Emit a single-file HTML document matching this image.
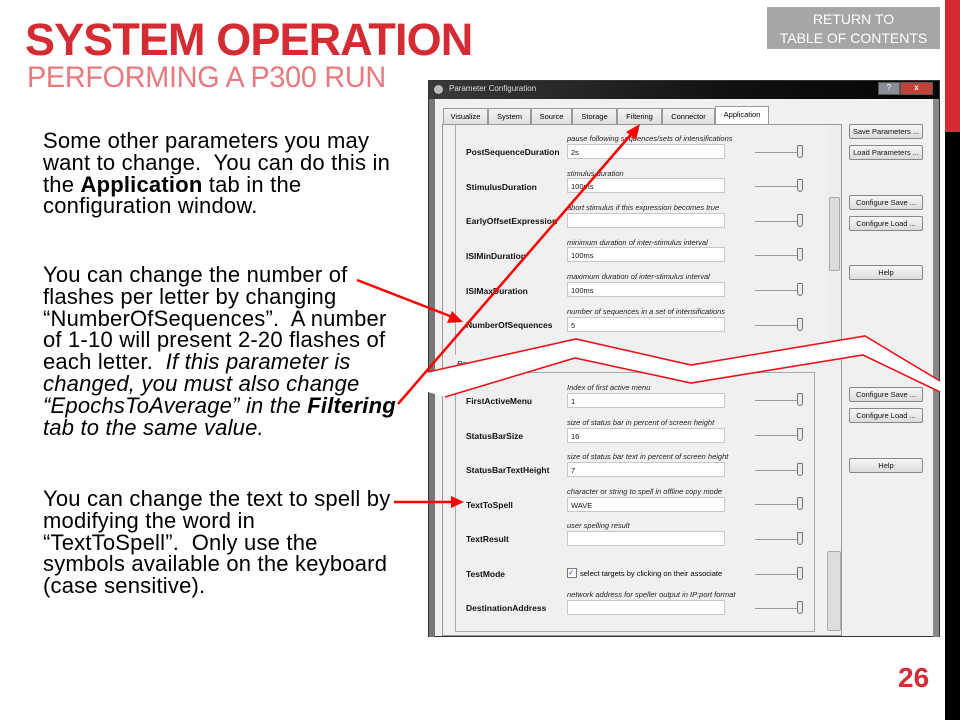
<!DOCTYPE html>
<html><head><meta charset="utf-8"><style>
*{margin:0;padding:0;box-sizing:border-box}
body{width:960px;height:720px;background:#fff;position:relative;overflow:hidden;font-family:"Liberation Sans",sans-serif}
.a{position:absolute;white-space:nowrap}
.t{font-size:22px;line-height:21.8px;color:#000;left:43px;letter-spacing:0.2px}
.win{position:absolute;left:428px;top:80px;width:512px;height:557px;background:#f0f0f0;border:1px solid #333}
.lbl{position:absolute;font-size:8.5px;font-weight:bold;color:#111}
.desc{position:absolute;font-size:7.5px;font-style:italic;color:#222}
.inp{position:absolute;width:158px;height:15px;background:#fff;border:1px solid #c8c8c8;font-size:7.5px;padding:3px 0 0 3px;color:#111}
.sl{position:absolute;width:48px;height:1px;background:#999}
.sl b{position:absolute;left:42px;top:-7px;width:6px;height:13px;background:#e8e8e8;border:1px solid #777;border-radius:1px 1px 3px 3px}
.btn{position:absolute;left:420px;width:74px;height:15px;border:1px solid #888;border-radius:2px;background:linear-gradient(#f6f6f6,#dcdcdc);font-size:7.5px;text-align:center;line-height:13px;color:#111}
.tab{position:absolute;top:27px;height:16px;border:1px solid #999;border-bottom:none;background:linear-gradient(#f4f4f4,#dfdfdf);font-size:7.5px;text-align:center;line-height:15px}
</style></head><body>
<div class="a" style="left:25px;top:14px;font-size:45px;font-weight:bold;color:#d52b32;letter-spacing:-0.9px">SYSTEM OPERATION</div>
<div class="a" style="left:27px;top:61px;font-size:30px;color:#e8797f;letter-spacing:-0.3px;transform:scaleX(0.96);transform-origin:left">PERFORMING A P300 RUN</div>
<div class="a" style="left:767px;top:7px;width:173px;height:42px;background:#a6a6a6;color:#fff;font-size:14px;text-align:center;line-height:19px;padding-top:3px">RETURN TO<br>TABLE OF CONTENTS</div>
<div class="a" style="left:945px;top:0;width:15px;height:132px;background:#d52b32"></div>
<div class="a" style="left:945px;top:132px;width:15px;height:588px;background:#000"></div>

<div class="a t" style="top:130px">Some other parameters you may<br>want to change.&nbsp; You can do this in<br>the <b>Application</b> tab in the<br>configuration window.</div>
<div class="a t" style="top:264px">You can change the number of<br>flashes per letter by changing<br>“NumberOfSequences”.&nbsp; A number<br>of 1-10 will present 2-20 flashes of<br>each letter.&nbsp; <i>If this parameter is<br>changed, you must also change<br>“EpochsToAverage” in the <b>Filtering</b><br>tab to the same value.</i></div>
<div class="a t" style="top:488px">You can change the text to spell by<br>modifying the word in<br>“TextToSpell”.&nbsp; Only use the<br>symbols available on the keyboard<br>(case sensitive).</div>

<div class="win">
 <div class="a" style="left:0;top:0;width:510px;height:18px;background:linear-gradient(90deg,#3a3a3a,#101010 60%,#050505)"></div>
 <div class="a" style="left:20px;top:3px;font-size:8px;color:#ddd">Parameter Configuration</div>
 <div class="a" style="left:5px;top:4px;width:9px;height:9px;border-radius:50%;background:#bbb"></div>
 <div class="a" style="left:449px;top:1px;width:22px;height:13px;background:#8a8f96;border:1px solid #555;color:#fff;font-size:8px;text-align:center">?</div>
 <div class="a" style="left:471px;top:1px;width:33px;height:13px;background:#c0433a;border:1px solid #555;color:#fff;font-size:8px;text-align:center;font-weight:bold">x</div>
 <div class="a" style="left:0;top:18px;width:6px;height:538px;background:#777"></div>
 <div class="a" style="left:504px;top:18px;width:6px;height:538px;background:#888"></div>
 <div class="tab" style="left:14px;width:45px">Visualize</div>
 <div class="tab" style="left:59px;width:43px">System</div>
 <div class="tab" style="left:102px;width:41px">Source</div>
 <div class="tab" style="left:143px;width:45px">Storage</div>
 <div class="tab" style="left:188px;width:45px">Filtering</div>
 <div class="tab" style="left:233px;width:53px">Connector</div>
 <div class="tab" style="left:286px;width:54px;top:25px;height:19px;background:#fff">Application</div>
 <div class="a" style="left:13px;top:43px;width:400px;height:512px;border:1px solid #999;background:#f0f0f0"></div>
 <div class="a" style="left:26px;top:44px;width:1px;height:230px;background:#aaa"></div>
 <div class="a" style="left:398px;top:44px;width:14px;height:240px;background:#eee"></div>
 <div class="a" style="left:400px;top:116px;width:11px;height:74px;background:#ddd;border:1px solid #aaa;border-radius:2px"></div>
 <div class="a" style="left:398px;top:470px;width:14px;height:80px;background:#ddd;border:1px solid #aaa;border-radius:2px"></div>
 <div class="a" style="left:26px;top:291px;width:360px;height:260px;border:1px solid #aaa"></div>
 <div class="a" style="left:28px;top:278px;font-size:7.5px;font-style:italic">Results</div>

 <div class="btn" style="top:43px">Save Parameters ...</div>
 <div class="btn" style="top:64px">Load Parameters ...</div>
 <div class="btn" style="top:114px">Configure Save ...</div>
 <div class="btn" style="top:135px">Configure Load ...</div>
 <div class="btn" style="top:184px">Help</div>
 <div class="btn" style="top:306px">Configure Save ...</div>
 <div class="btn" style="top:327px">Configure Load ...</div>
 <div class="btn" style="top:377px">Help</div>

 <div class="desc" style="left:138px;top:53px">pause following sequences/sets of intensifications</div><div class="lbl" style="left:37px;top:66px">PostSequenceDuration</div><div class="inp" style="left:138px;top:63px">2s</div><div class="sl" style="left:326px;top:71px"><b></b></div>
 <div class="desc" style="left:138px;top:88px">stimulus duration</div><div class="lbl" style="left:37px;top:101px">StimulusDuration</div><div class="inp" style="left:138px;top:97px">100ms</div><div class="sl" style="left:326px;top:105px"><b></b></div>
 <div class="desc" style="left:138px;top:122px">abort stimulus if this expression becomes true</div><div class="lbl" style="left:37px;top:135px">EarlyOffsetExpression</div><div class="inp" style="left:138px;top:132px"></div><div class="sl" style="left:326px;top:140px"><b></b></div>
 <div class="desc" style="left:138px;top:157px">minimum duration of inter-stimulus interval</div><div class="lbl" style="left:37px;top:170px">ISIMinDuration</div><div class="inp" style="left:138px;top:166px">100ms</div><div class="sl" style="left:326px;top:174px"><b></b></div>
 <div class="desc" style="left:138px;top:191px">maximum duration of inter-stimulus interval</div><div class="lbl" style="left:37px;top:205px">ISIMaxDuration</div><div class="inp" style="left:138px;top:201px">100ms</div><div class="sl" style="left:326px;top:209px"><b></b></div>
 <div class="desc" style="left:138px;top:226px">number of sequences in a set of intensifications</div><div class="lbl" style="left:37px;top:239px">NumberOfSequences</div><div class="inp" style="left:138px;top:236px">5</div><div class="sl" style="left:326px;top:244px"><b></b></div>

 <div class="desc" style="left:138px;top:302px">Index of first active menu</div><div class="lbl" style="left:37px;top:315px">FirstActiveMenu</div><div class="inp" style="left:138px;top:312px">1</div><div class="sl" style="left:326px;top:319px"><b></b></div>
 <div class="desc" style="left:138px;top:337px">size of status bar in percent of screen height</div><div class="lbl" style="left:37px;top:350px">StatusBarSize</div><div class="inp" style="left:138px;top:347px">16</div><div class="sl" style="left:326px;top:354px"><b></b></div>
 <div class="desc" style="left:138px;top:371px">size of status bar text in percent of screen height</div><div class="lbl" style="left:37px;top:384px">StatusBarTextHeight</div><div class="inp" style="left:138px;top:381px">7</div><div class="sl" style="left:326px;top:389px"><b></b></div>
 <div class="desc" style="left:138px;top:406px">character or string to spell in offline copy mode</div><div class="lbl" style="left:37px;top:419px">TextToSpell</div><div class="inp" style="left:138px;top:416px">WAVE</div><div class="sl" style="left:326px;top:423px"><b></b></div>
 <div class="desc" style="left:138px;top:440px">user spelling result</div><div class="lbl" style="left:37px;top:453px">TextResult</div><div class="inp" style="left:138px;top:450px"></div><div class="sl" style="left:326px;top:458px"><b></b></div>
 <div class="lbl" style="left:37px;top:488px">TestMode</div><div class="a" style="left:138px;top:487px;width:10px;height:10px;border:1px solid #777;background:#fff;font-size:8px;line-height:8px;color:#2a5ab8">✓</div><div class="a" style="left:151px;top:488px;font-size:7.5px">select targets by clicking on their associate</div><div class="sl" style="left:326px;top:493px"><b></b></div>
 <div class="desc" style="left:138px;top:509px">network address for speller output in IP:port format</div><div class="lbl" style="left:37px;top:522px">DestinationAddress</div><div class="inp" style="left:138px;top:519px"></div><div class="sl" style="left:326px;top:527px"><b></b></div>
</div>

<svg class="a" style="left:0;top:0" width="960" height="720">
 <polygon points="428,372 576,339 691,365 865,336 940,381 940,392 863,355 691,383 575,358 445,397 428,392" fill="#fff"/>
 <polyline points="428,372 576,339 691,365 865,336 940,381" fill="none" stroke="#e8141a" stroke-width="1.6"/>
 <polyline points="445,397 575,358 691,383 863,355 940,392" fill="none" stroke="#e8141a" stroke-width="1.6"/>
 <g stroke="#f00" stroke-width="2.5" fill="#f00">
  <line x1="357" y1="280" x2="455" y2="318"/>
  <polygon points="463,322 447,323 452,311" stroke="none"/>
  <line x1="398" y1="404" x2="634" y2="131"/>
  <polygon points="640,124 636,140 626,132" stroke="none"/>
  <line x1="394" y1="502" x2="454" y2="502"/>
  <polygon points="464,502 451,496 451,508" stroke="none"/>
 </g>
</svg>
<div class="a" style="left:898px;top:662px;font-size:28px;font-weight:bold;color:#d52b32">26</div>
</body></html>
